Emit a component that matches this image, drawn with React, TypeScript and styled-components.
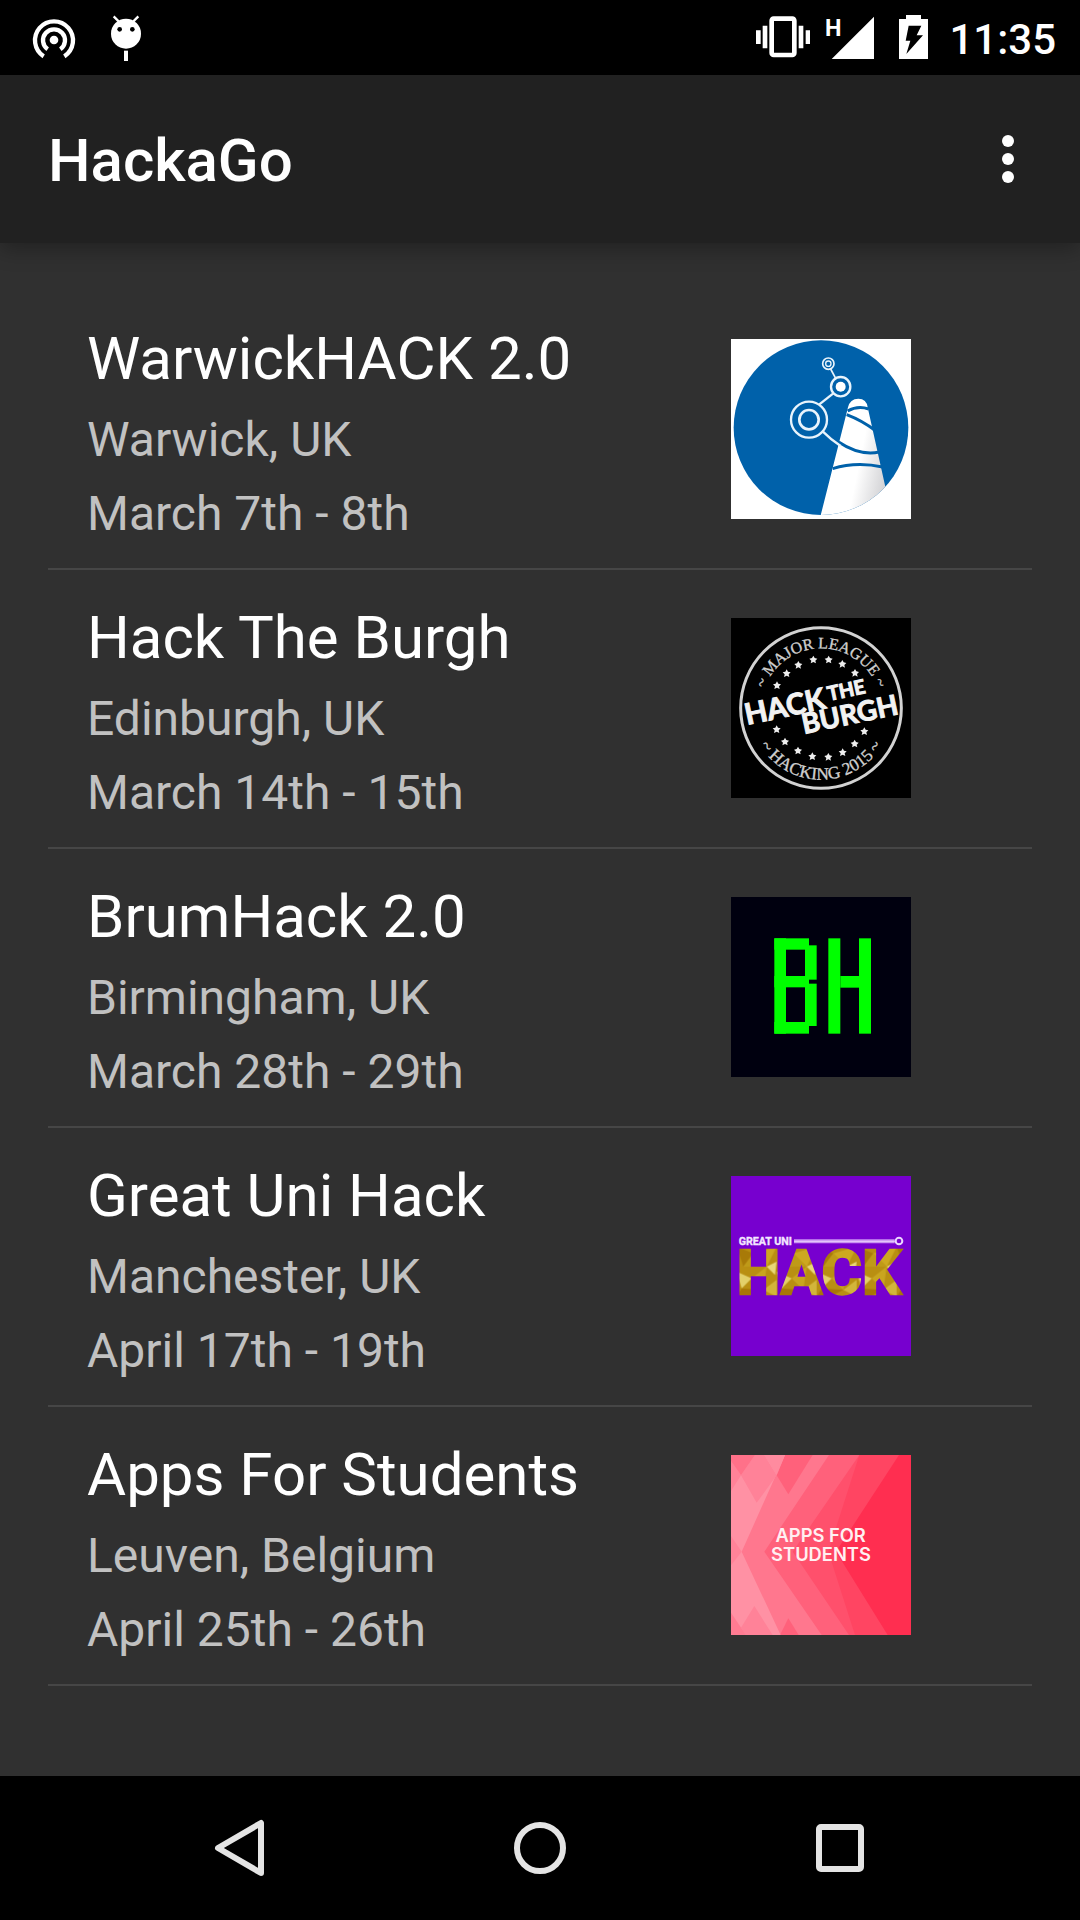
import React from "react";
import styled, { createGlobalStyle } from "styled-components";

const GlobalStyle = createGlobalStyle`
  *, *::before, *::after { box-sizing: border-box; }
  body { margin: 0; background: #303030; }
`;

const Screen = styled.div`
  display: flex;
  flex-direction: column;
  min-height: 100vh;
  background: #303030;
  color: #fff;
  font-family: Roboto, "Noto Sans", sans-serif;
`;

const StatusBar = styled.div`
  display: flex;
  justify-content: space-between;
  height: 75px;
  padding: 0 24px 0 18px;
  background: #000;
`;

const StatusGroup = styled.div<{ $gap: number }>`
  display: flex;
  align-items: center;
  gap: ${(p) => p.$gap}px;
`;

const StatusIcon = styled.svg<{ $width: number }>`
  display: block;
  width: ${(p) => p.$width}px;
  height: 75px;
`;

const Clock = styled.time`
  padding-top: 4px;
  font-size: 42px;
  font-weight: 500;
  line-height: 48px;
`;

const AppBar = styled.header`
  position: relative;
  display: flex;
  align-items: center;
  justify-content: space-between;
  height: 168px;
  padding: 0 48px;
  background: #212121;
  box-shadow: 0 6px 20px rgba(0, 0, 0, 0.3);
`;

const AppTitle = styled.h1`
  margin: 0;
  padding-top: 4px;
  font-size: 60px;
  font-weight: 500;
  line-height: 80px;
`;

const IconButton = styled.button`
  display: flex;
  align-items: center;
  justify-content: center;
  padding: 0;
  border: 0;
  background: none;
  cursor: pointer;
`;

const MenuButton = styled(IconButton)`
  width: 48px;
  height: 96px;
`;

const Content = styled.main`
  flex: 1;
  padding: 48px;
`;

const EventList = styled.ul`
  margin: 0;
  padding: 0;
  list-style: none;
`;

const EventRow = styled.li`
  display: flex;
  align-items: center;
  justify-content: space-between;
  padding: 28px 121px 17px 39px;
  border-bottom: 2px solid #464646;
`;

const EventName = styled.h2`
  margin: 0 0 4px;
  font-size: 60px;
  font-weight: 400;
  line-height: 80px;
`;

const EventDetail = styled.p`
  margin: 0;
  color: #c1c1c1;
  font-size: 48px;
  line-height: 74px;
`;

const Logo = styled.svg`
  display: block;
  flex: none;
  align-self: flex-start;
  width: 180px;
  height: 180px;
  margin-top: 20px;
`;

const NavBar = styled.nav`
  display: grid;
  grid-template-columns: repeat(3, 1fr);
  height: 144px;
  padding: 0 90px;
  background: #000;
`;

const WarwickLogo = () => (
  <Logo viewBox="33 27 540 540" role="img" aria-label="WarwickHACK logo">
    <defs>
      <linearGradient id="cone" x1="0.2" y1="0.5" x2="1" y2="0.8">
        <stop offset="0.45" stopColor="#fff" />
        <stop offset="1" stopColor="#cfcfd2" />
      </linearGradient>
      <clipPath id="disc">
        <circle cx="303" cy="293" r="262" />
      </clipPath>
    </defs>
    <rect x="33" y="27" width="540" height="540" fill="#fff" />
    <circle cx="303" cy="293" r="262" fill="#0061aa" />
    <g clipPath="url(#disc)">
      <path d="M302 556 L384 232 Q390 206 415 206 Q440 206 443 232 L496 470 L480 567 H300Z" fill="url(#cone)" />
      <g fill="none" stroke="#0061aa" strokeWidth="9">
        <path d="M383 243 Q413 226 446 237" />
        <path d="M380 254 Q427 272 466 302" />
        <path d="M356 336 Q418 378 478 366" />
        <path d="M338 416 Q408 394 488 411" />
      </g>
    </g>
    <g fill="none" stroke="#e9f4fc">
      <circle cx="325" cy="101" r="17" strokeWidth="5" />
      <circle cx="325" cy="101" r="8" strokeWidth="4" />
      <path d="M332 117 L347 145" strokeWidth="5" />
      <circle cx="362" cy="170" r="29" strokeWidth="7" />
      <circle cx="362" cy="170" r="15" fill="#fff" stroke="none" />
      <path d="M340 190 L298 223" strokeWidth="7" />
      <circle cx="267" cy="269" r="54" strokeWidth="7" />
      <circle cx="267" cy="269" r="29" strokeWidth="8" />
      <path d="M308 304 Q334 330 362 348" strokeWidth="7" />
    </g>
  </Logo>
);

const stars = [
  [171, 232], [200, 196], [235, 171], [280, 155], [326, 155], [367, 168], [405, 195],
  [170, 364], [195, 401], [234, 428], [277, 445], [325, 447], [368, 433], [404, 407], [433, 370],
];

const BurghLogo = () => (
  <Logo viewBox="33 30 540 540" role="img" aria-label="Hack The Burgh logo">
    <defs>
      <path id="arcTop" d="M124 300 A179 179 0 0 1 482 300" />
      <path id="arcBottom" d="M88 300 A215 215 0 0 0 518 300" />
    </defs>
    <rect x="33" y="30" width="540" height="540" fill="#000" />
    <circle cx="303" cy="300" r="241" fill="none" stroke="#d2d2d2" strokeWidth="9" />
    <g
      fill="#cfcfcf"
      stroke="#cfcfcf"
      strokeWidth="1"
      fontFamily="'Liberation Serif', serif"
      textAnchor="middle"
    >
      <text fontSize="48"><textPath href="#arcTop" startOffset="50%">~ MAJOR LEAGUE ~</textPath></text>
      <text fontSize="52"><textPath href="#arcBottom" startOffset="50%">~ HACKING 2015 ~</textPath></text>
    </g>
    <g fill="#eee">
      {stars.map(([x, y]) => (
        <path
          key={`${x}-${y}`}
          transform={`translate(${x} ${y})`}
          d="M0 -12 L4 -5 L12 -3 L6 3 L8 11 L0 7 L-8 11 L-6 3 L-12 -3 L-4 -5Z"
        />
      ))}
    </g>
    <g
      fill="#f2f2f2"
      stroke="#f2f2f2"
      strokeWidth="3"
      fontFamily="Lato, sans-serif"
      fontWeight="700"
      transform="rotate(-12 303 300)"
    >
      <text x="75" y="304" fontSize="88">HACK</text>
      <text x="331" y="284" fontSize="59">THE</text>
      <text x="237" y="366" fontSize="83">BURGH</text>
    </g>
  </Logo>
);

const BrumLogo = () => (
  <Logo viewBox="33 27 540 540" role="img" aria-label="BrumHack logo">
    <rect x="33" y="27" width="540" height="540" fill="#00000f" />
    <g fill="#0f0">
      <rect x="163" y="151" width="35" height="286" />
      <rect x="163" y="151" width="104" height="34" />
      <rect x="163" y="264" width="104" height="34" />
      <rect x="163" y="402" width="104" height="35" />
      <rect x="255" y="172" width="35" height="103" />
      <rect x="255" y="287" width="35" height="127" />
      <rect x="325" y="151" width="36" height="286" />
      <rect x="417" y="151" width="36" height="286" />
      <rect x="361" y="264" width="56" height="35" />
    </g>
  </Logo>
);

const GreatUniLogo = () => (
  <Logo viewBox="33 30 540 540" role="img" aria-label="Great Uni Hack logo">
    <defs>
      <pattern id="gold" width="120" height="150" patternUnits="userSpaceOnUse" x="50" y="242">
        <rect width="120" height="150" fill="#b98f12" />
        <path d="M0 0 L50 20 L20 60Z" fill="#a87a08" />
        <path d="M50 20 L120 0 L90 60Z" fill="#cda820" />
        <path d="M20 60 L90 60 L50 20Z" fill="#bf9a18" />
        <path d="M90 60 L120 45 L115 85Z" fill="#e8d877" />
        <path d="M0 75 L45 95 L15 125Z" fill="#e3d06a" />
        <path d="M45 95 L90 60 L80 130Z" fill="#c9a51f" />
        <path d="M15 125 L80 130 L40 150 L0 150Z" fill="#a87606" />
        <path d="M80 130 L120 100 L120 150Z" fill="#d2b53a" />
      </pattern>
    </defs>
    <rect x="33" y="30" width="540" height="540" fill="#7700cf" />
    <text x="56" y="237" fill="#f3e6ff" stroke="#f3e6ff" strokeWidth="1" fontFamily="Roboto, sans-serif" fontWeight="700" fontSize="32">
      GREAT UNI
    </text>
    <path d="M222 226 H524" stroke="#c992f2" strokeWidth="12" />
    <path d="M222 226 H524" stroke="#e3c4fa" strokeWidth="4" />
    <circle cx="537" cy="225" r="10" fill="none" stroke="#ecd5ff" strokeWidth="6" />
    <text x="50" y="385" fill="url(#gold)" stroke="url(#gold)" strokeWidth="7" fontFamily="Roboto, sans-serif" fontWeight="700" fontSize="185">
      HACK
    </text>
  </Logo>
);

const StudentsLogo = () => (
  <Logo viewBox="33 27 540 540" role="img" aria-label="Apps For Students logo">
    <rect x="33" y="27" width="540" height="540" fill="#ff2e50" />
    <path d="M33 27 H537 L348 317 L503 567 H33Z" fill="#ff4562" />
    <path d="M33 27 H418 L325 317 L405 567 H33Z" fill="#ff506c" />
    <path d="M33 27 H418 L218 317 L387 567 H33Z" fill="#ff617b" />
    <path d="M33 27 H327 L133 317 L305 567 H33Z" fill="#ff778e" />
    <path d="M195 27 H278 L205 145 L170 88Z" fill="#ff617b" />
    <path d="M205 517 L236 567 H180Z" fill="#ff617b" />
    <path d="M33 27 H195 L65 317 L182 567 H33Z" fill="#ff91a4" />
    <path d="M105 27 H133 L170 88 L110 170 L63 88Z" fill="#ff8298" />
    <path d="M133 27 H195 L170 88Z" fill="#ff8b9f" />
    <path d="M33 45 L63 88 L33 135Z" fill="#ff8298" />
    <path d="M33 27 H105 L63 88 L33 45Z" fill="#ff7189" />
    <path d="M33 270 L65 317 L33 358Z" fill="#ff8399" />
    <path d="M103 480 L158 567 H78 L63 545Z" fill="#ff8298" />
    <path d="M33 500 L78 567 H33Z" fill="#ff7b92" />
    <g fill="#fff0f2" fontFamily="Inter, sans-serif" fontWeight="600" fontSize="55" textAnchor="middle">
      <text x="302" y="289">APPS FOR</text>
      <text x="303" y="346">STUDENTS</text>
    </g>
  </Logo>
);

const events = [
  { name: "WarwickHACK 2.0", place: "Warwick, UK", dates: "March 7th - 8th", Art: WarwickLogo },
  { name: "Hack The Burgh", place: "Edinburgh, UK", dates: "March 14th - 15th", Art: BurghLogo },
  { name: "BrumHack 2.0", place: "Birmingham, UK", dates: "March 28th - 29th", Art: BrumLogo },
  { name: "Great Uni Hack", place: "Manchester, UK", dates: "April 17th - 19th", Art: GreatUniLogo },
  { name: "Apps For Students", place: "Leuven, Belgium", dates: "April 25th - 26th", Art: StudentsLogo },
];

export default function App() {
  return (
    <Screen>
      <GlobalStyle />
      <StatusBar>
        <StatusGroup $gap={0}>
          <StatusIcon $width={72} viewBox="54 0 216 225" aria-hidden="true">
            <circle cx="162" cy="120" r="13" fill="#fff" />
            <g fill="none" stroke="#fff" strokeWidth="13">
              <path d="M143 148 A33 33 0 1 1 181 148" />
              <path d="M131 169 A57 57 0 1 1 193 169" />
            </g>
          </StatusIcon>
          <StatusIcon $width={72} viewBox="270 0 216 225" aria-hidden="true">
            <circle cx="378" cy="101" r="45" fill="#fff" />
            <path d="M341 49 L356 64 M415 49 L400 64" stroke="#fff" strokeWidth="7" />
            <circle cx="359" cy="88" r="7" />
            <circle cx="397" cy="88" r="7" />
            <rect x="372" y="152" width="12" height="31" fill="#fff" />
          </StatusIcon>
        </StatusGroup>
        <StatusGroup $gap={12}>
          <StatusIcon $width={56} viewBox="78 0 168 225" aria-hidden="true">
            <rect x="125" y="56" width="68" height="109" rx="6" fill="none" stroke="#fff" strokeWidth="14" />
            <path d="M78 91h14v41H78z M98 77h14v68H98z M206 77h14v68h-14z M227 91h13v41h-13z" fill="#fff" />
          </StatusIcon>
          <StatusIcon $width={52} viewBox="282 0 156 225" aria-hidden="true">
            <text x="285" y="107" fill="#fff" fontFamily="Roboto, sans-serif" fontWeight="700" fontSize="70">H</text>
            <path d="M432 50 V177 H305Z" fill="#fff" />
          </StatusIcon>
          <StatusIcon $width={49} viewBox="474 0 147 225" aria-hidden="true">
            <path d="M528 45 H573 V57 H594 V177 H507 V57 H528Z" fill="#fff" />
            <path d="M536 77 H574 L560 106 H579 L529 162 L541 122 H527Z" fill="#000" />
          </StatusIcon>
          <Clock>11:35</Clock>
        </StatusGroup>
      </StatusBar>
      <AppBar>
        <AppTitle>HackaGo</AppTitle>
        <MenuButton type="button" aria-label="More options">
          <svg width="12" height="48" viewBox="0 0 12 48" fill="#fff">
            <circle cx="6" cy="6" r="6" />
            <circle cx="6" cy="24" r="6" />
            <circle cx="6" cy="42" r="6" />
          </svg>
        </MenuButton>
      </AppBar>
      <Content>
        <EventList>
          {events.map(({ name, place, dates, Art }) => (
            <EventRow key={name}>
              <div>
                <EventName>{name}</EventName>
                <EventDetail>{place}</EventDetail>
                <EventDetail>{dates}</EventDetail>
              </div>
              <Art />
            </EventRow>
          ))}
        </EventList>
      </Content>
      <NavBar>
        <IconButton type="button" aria-label="Back">
          <svg width="72" height="72" fill="none" stroke="#e4e4e4" strokeWidth="6" strokeLinejoin="round">
            <path d="M57 11 V61 L14 36Z" />
          </svg>
        </IconButton>
        <IconButton type="button" aria-label="Home">
          <svg width="72" height="72" fill="none" stroke="#e4e4e4" strokeWidth="6">
            <circle cx="36" cy="36" r="23" />
          </svg>
        </IconButton>
        <IconButton type="button" aria-label="Recent apps">
          <svg width="72" height="72" fill="none" stroke="#e4e4e4" strokeWidth="6">
            <rect x="15" y="15" width="42" height="42" rx="2" />
          </svg>
        </IconButton>
      </NavBar>
    </Screen>
  );
}
